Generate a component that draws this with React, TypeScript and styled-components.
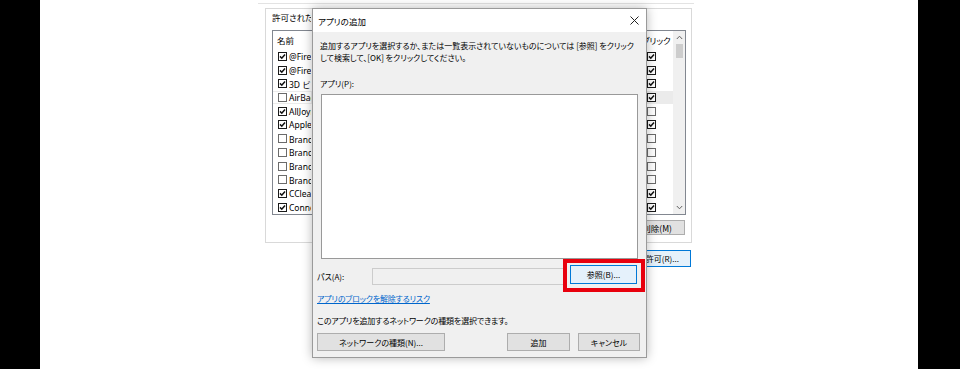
import React from "react";
import styled, { createGlobalStyle } from "styled-components";

const GlobalStyle = createGlobalStyle`
  html, body {
    margin: 0;
    padding: 0;
    background: #000;
  }
  body {
    font-family: "Noto Sans CJK JP", "Noto Sans", sans-serif;
    font-size: 8px;
    color: #000;
    font-feature-settings: "palt";
  }
`;

const Stage = styled.div`
  width: 960px;
  height: 369px;
  background: #000;
  display: flex;
  overflow: hidden;
`;

const Screen = styled.div`
  position: relative;
  margin-left: 40px;
  width: 878px;
  height: 369px;
  background: #fff;
  overflow: hidden;
`;

/* ---------- background window (allowed apps) ---------- */

const BgWindow = styled.div`
  position: absolute;
  left: 218px;
  top: 0;
  width: 440px;
  display: flex;
  flex-direction: column;
`;

const TopEdge = styled.div`
  height: 3px;
  margin: 0 4px 0 0;
  border-bottom: 1px solid #e3e3e3;
`;

const Panel = styled.div`
  box-sizing: border-box;
  margin: 4px 0 0 7px;
  width: 427px;
  height: 235px;
  border: 1px solid #d9d9d9;
  padding: 2px 5px 0 6px;
  display: flex;
  flex-direction: column;
`;

// the dialog covers everything right of x=311, so the label is cut there
const PanelLabel = styled.div`
  width: 39px;
  overflow: hidden;
  white-space: nowrap;
  line-height: 12px;
  font-size: 8.5px;
`;

const ListBox = styled.div`
  box-sizing: border-box;
  margin-top: 7px;
  width: 414px;
  height: 185px;
  border: 1px solid #828790;
  background: #fff;
  display: flex;
`;

const Columns = styled.div`
  flex: 1;
  display: flex;
  flex-direction: column;
  overflow: hidden;
`;

const HeaderRow = styled.div`
  height: 19px;
  display: flex;
  align-items: center;
  font-size: 8.5px;
  white-space: nowrap;
`;

const HeaderName = styled.div`
  width: 38px;
  padding-left: 4px;
  box-sizing: border-box;
  overflow: hidden;
`;

const HeaderPrivate = styled.div`
  width: 323px;
`;

const Row = styled.div<{ $active?: boolean }>`
  height: 14px;
  display: flex;
  align-items: center;
  background: ${(p) => (p.$active ? "#ebebeb" : "transparent")};
  font-family: "Noto Sans", "Noto Sans CJK JP", sans-serif;
  font-size: 8.5px;
  font-feature-settings: normal;
`;

const NameCell = styled.div`
  width: 38px;
  padding-left: 5px;
  box-sizing: border-box;
  display: flex;
  align-items: center;
  gap: 2px;
  white-space: nowrap;
  overflow: hidden;
  background: #fff;
`;

const PrivateCell = styled.div`
  width: 336px;
`;

const Box = styled.span<{ $checked?: boolean }>`
  flex: none;
  box-sizing: border-box;
  width: 9px;
  height: 9px;
  border: 1px solid ${(p) => (p.$checked ? "#1a1a1a" : "#6b6b6b")};
  background: #fff;
  display: inline-flex;
  align-items: center;
  justify-content: center;
`;

const Scrollbar = styled.div`
  width: 12px;
  background: #f0f0f0;
  display: flex;
  flex-direction: column;
  align-items: center;
`;

const ScrollArrow = styled.div`
  height: 13px;
  display: flex;
  align-items: center;
  justify-content: center;
`;

const ScrollThumb = styled.div`
  width: 7px;
  height: 14px;
  background: #cdcdcd;
`;

const ScrollTrack = styled.div`
  flex: 1;
`;

const PanelButtons = styled.div`
  display: flex;
  justify-content: flex-end;
  margin-top: 5px;
  padding-right: 1px;
`;

const WinButton = styled.div<{ $w: number; $h?: number; $focus?: boolean; $end?: number }>`
  box-sizing: border-box;
  width: ${(p) => p.$w}px;
  height: ${(p) => p.$h ?? 18}px;
  border: 1px solid ${(p) => (p.$focus ? "#0078d7" : "#adadad")};
  background: ${(p) => (p.$focus ? "#e5f1fb" : "#e1e1e1")};
  display: flex;
  align-items: center;
  justify-content: ${(p) => (p.$end !== undefined ? "flex-end" : "center")};
  padding-right: ${(p) => p.$end ?? 0}px;
  font-size: 8px;
  white-space: nowrap;
  overflow: hidden;
`;

const FooterRow = styled.div`
  display: flex;
  justify-content: flex-end;
  width: 433px;
  margin-top: 7px;
`;

/* ---------- add app dialog ---------- */

const Dialog = styled.div`
  position: absolute;
  left: 272px;
  top: 8px;
  width: 335px;
  height: 350px;
  box-sizing: border-box;
  border: 1px solid #9a9a9a;
  background: #f0f0f0;
  box-shadow: 0 0 10px rgba(0, 0, 0, 0.28);
  display: flex;
  flex-direction: column;
`;

const TitleBar = styled.div`
  height: 23px;
  background: #fff;
  display: flex;
  align-items: center;
  padding-left: 5px;
`;

const Title = styled.div`
  flex: 1;
  font-size: 8.5px;
`;

const CloseButton = styled.div`
  width: 23px;
  height: 23px;
  display: flex;
  align-items: center;
  justify-content: center;
`;

const Client = styled.div`
  flex: 1;
  display: flex;
  flex-direction: column;
  padding: 0 6px 6px 4px;
`;

const TextLine = styled.div<{ $mt: number; $ml?: number }>`
  margin-top: ${(p) => p.$mt}px;
  margin-left: ${(p) => p.$ml ?? 0}px;
  line-height: 12px;
  white-space: nowrap;
`;

const LinkText = styled.span`
  color: #0066cc;
  text-decoration: underline;
  letter-spacing: -0.2px;
`;

const AppList = styled.div`
  box-sizing: border-box;
  margin: 4px 0 0 4px;
  width: 317px;
  height: 165px;
  border: 1px solid #999999;
  background: #fff;
`;

const PathRow = styled.div`
  margin-top: 6px;
  height: 19px;
  display: flex;
  align-items: center;
`;

const PathLabel = styled.div`
  width: 55px;
  padding-top: 3px;
`;

const PathInput = styled.div`
  box-sizing: border-box;
  width: 195px;
  height: 17px;
  margin-top: 3px;
  border: 1px solid #cccccc;
  background: #f0f0f0;
`;

const Highlight = styled.div`
  position: relative;
  margin-left: 3px;
`;

const RedFrame = styled.div`
  position: absolute;
  left: -7px;
  right: -8px;
  top: -6px;
  bottom: -8px;
  border: 4px solid #e8000d;
  pointer-events: none;
`;

const ButtonRow = styled.div`
  margin-top: 6px;
  display: flex;
  align-items: center;
  gap: 8px;
`;

const Spacer = styled.div`
  flex: 1;
`;

const NoteText = styled(TextLine)`
  letter-spacing: -0.15px;
`;

const Check = () => (
  <svg width="7" height="7" viewBox="0 0 7 7">
    <path d="M1 3.4 L2.8 5.2 L6 1.4" fill="none" stroke="#111" strokeWidth="1.5" />
  </svg>
);

const CheckBox: React.FC<{ checked: boolean }> = ({ checked }) => (
  <Box $checked={checked}>{checked && <Check />}</Box>
);

const rows: { name: string; left: boolean; right: boolean }[] = [
  { name: "@FirewallAPI.dll,-80201", left: true, right: true },
  { name: "@FirewallAPI.dll,-80206", left: true, right: true },
  { name: "3D ビューアー", left: true, right: true },
  { name: "AirBackup", left: false, right: true },
  { name: "AllJoyn ルーター", left: true, right: false },
  { name: "Apple Mobile Device Service", left: true, right: true },
  { name: "BranchCache - コンテンツ取得", left: false, right: false },
  { name: "BranchCache - ピア検出", left: false, right: false },
  { name: "BranchCache - ホスト型キャッシュ クライアント", left: false, right: false },
  { name: "BranchCache - ホスト型キャッシュ サーバー", left: false, right: false },
  { name: "CCleaner", left: true, right: true },
  { name: "Connect", left: true, right: true },
];

const App: React.FC = () => {
  return (
    <Stage>
      <GlobalStyle />
      <Screen>
        <BgWindow>
          <TopEdge />
          <Panel>
            <PanelLabel>許可されたアプリおよび機能(A):</PanelLabel>
            <ListBox>
              <Columns>
                <HeaderRow>
                  <HeaderName>名前</HeaderName>
                  <HeaderPrivate />
                  <span>パブリック</span>
                </HeaderRow>
                {rows.map((r, i) => (
                  <Row key={i} $active={i === 3}>
                    <NameCell>
                      <CheckBox checked={r.left} />
                      <span>{r.name}</span>
                    </NameCell>
                    <PrivateCell />
                    <CheckBox checked={r.right} />
                  </Row>
                ))}
              </Columns>
              <Scrollbar>
                <ScrollArrow>
                  <svg width="7" height="5" viewBox="0 0 7 5">
                    <path d="M0.8 4 L3.5 1.2 L6.2 4" fill="none" stroke="#606060" strokeWidth="1" />
                  </svg>
                </ScrollArrow>
                <ScrollThumb />
                <ScrollTrack />
                <ScrollArrow>
                  <svg width="7" height="5" viewBox="0 0 7 5">
                    <path d="M0.8 1 L3.5 3.8 L6.2 1" fill="none" stroke="#606060" strokeWidth="1" />
                  </svg>
                </ScrollArrow>
              </Scrollbar>
            </ListBox>
            <PanelButtons>
              <WinButton $w={60} $h={15} $end={12} style={{ fontSize: 8.5 }}>
                削除(M)
              </WinButton>
            </PanelButtons>
          </Panel>
          <FooterRow>
            <WinButton $w={50} $h={17} $focus $end={11}>
              許可(R)...
            </WinButton>
          </FooterRow>
        </BgWindow>

        <Dialog>
          <TitleBar>
            <Title>アプリの追加</Title>
            <CloseButton>
              <svg width="9" height="9" viewBox="0 0 9 9">
                <path d="M0.5 0.5 L8.5 8.5 M8.5 0.5 L0.5 8.5" stroke="#222" strokeWidth="1" />
              </svg>
            </CloseButton>
          </TitleBar>
          <Client>
            <TextLine $mt={8} $ml={3}>
              追加するアプリを選択するか、または一覧表示されていないものについては [参照] をクリック
              <br />
              して検索して、[OK] をクリックしてください。
            </TextLine>
            <TextLine $mt={14} $ml={3}>
              アプリ(P):
            </TextLine>
            <AppList />
            <PathRow>
              <PathLabel>パス(A):</PathLabel>
              <PathInput />
              <Highlight>
                <WinButton $w={67} $h={19} $focus>
                  参照(B)...
                </WinButton>
                <RedFrame />
              </Highlight>
            </PathRow>
            <TextLine $mt={9}>
              <LinkText>アプリのブロックを解除するリスク</LinkText>
            </TextLine>
            <NoteText $mt={10}>このアプリを追加するネットワークの種類を選択できます。</NoteText>
            <ButtonRow>
              <WinButton $w={128} $h={18}>ネットワークの種類(N)...</WinButton>
              <Spacer />
              <WinButton $w={63} $h={18}>追加</WinButton>
              <WinButton $w={62} $h={18}>キャンセル</WinButton>
            </ButtonRow>
          </Client>
        </Dialog>
      </Screen>
    </Stage>
  );
};

export default App;
